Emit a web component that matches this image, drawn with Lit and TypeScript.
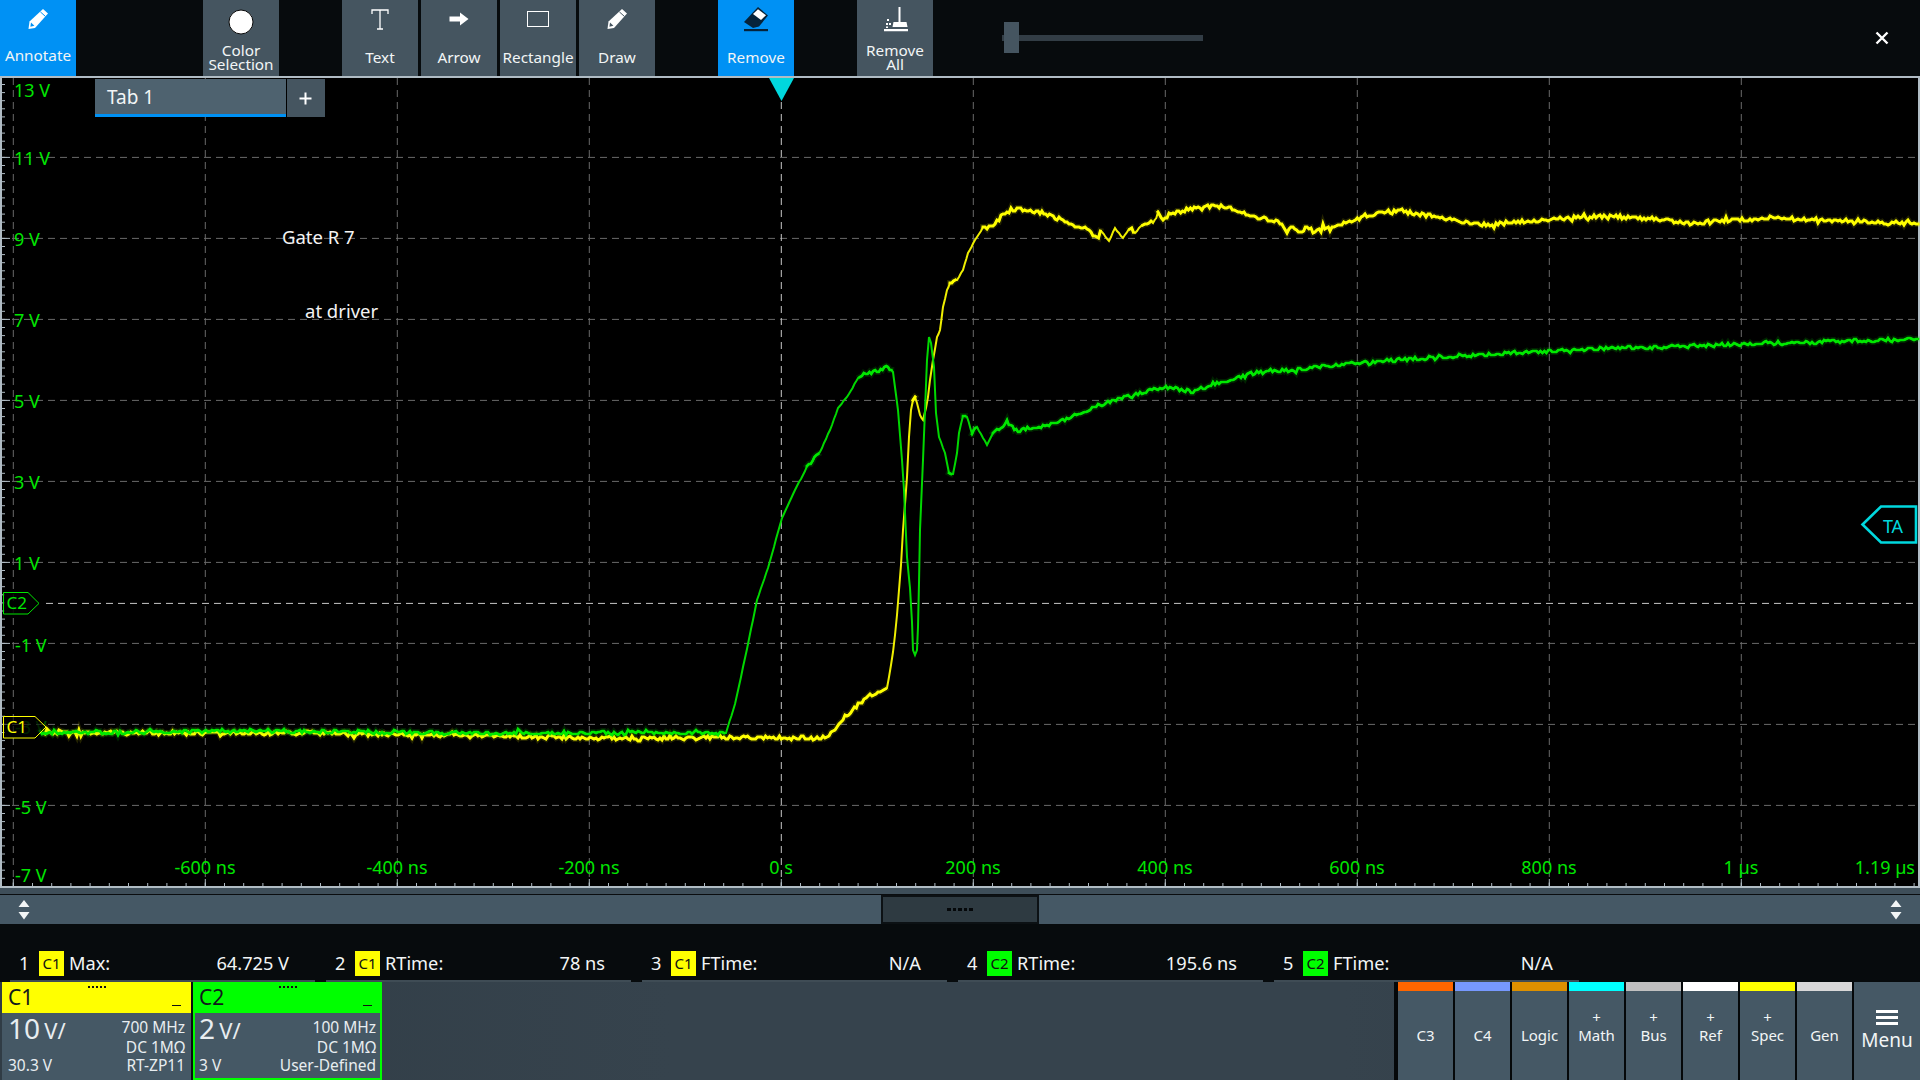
import { LitElement, html, css, svg } from "lit";
import { customElement } from "lit/decorators.js";

type P = [number, number];
const YEL: P[] = [[45,733],[300,733],[500,736],[600,738],[700,738],[825,738],[835,729],[845,717],[860,703],[870,696],[880,693],[887,688],[889,677],[891,665],[893,652],[895,635],[897,615],[899,590],[901,565],[903,530],[907,477],[909,437],[911,410],[913,399],[917,403],[920,415],[923,420],[926,408],[928,397],[930,380],[933,360],[937,337],[940,330],[943,307],[947,290],[950,283],[957,280],[963,270],[968,253],[975,240],[983,228],[993,226],[1003,215],[1017,209],[1040,212],[1057,218],[1073,225],[1087,228],[1095,237],[1102,232],[1109,241],[1115,228],[1123,238],[1130,227],[1135,233],[1143,223],[1153,223],[1158,215],[1163,218],[1173,213],[1200,207],[1223,206],[1240,212],[1260,218],[1280,222],[1287,230],[1293,227],[1302,233],[1307,227],[1315,233],[1323,228],[1330,230],[1340,224],[1365,216],[1396,211],[1430,216],[1482,225],[1540,220],[1604,216],[1650,219],[1690,223],[1776,218],[1850,221],[1920,224]];
const GRN: P[] = [[40,733],[250,731],[500,733],[600,733],[726,733],[735,704],[747,649],[757,600],[768,568],[782,518],[795,490],[807,467],[820,452],[830,430],[838,408],[847,397],[860,375],[877,371],[888,367],[893,372],[898,410],[902,460],[904,490],[907,557],[910,588],[912,622],[913,650],[915,655],[917,650],[918,627],[919,583],[920,530],[923,460],[925,410],[927,360],[929,337],[931,343],[934,367],[936,413],[939,437],[945,453],[949,473],[953,474],[957,453],[959,433],[963,415],[967,417],[972,433],[977,427],[987,445],[993,433],[1007,423],[1018,431],[1035,428],[1053,424],[1102,404],[1140,393],[1166,387],[1193,392],[1217,383],[1253,373],[1290,370],[1338,365],[1371,362],[1469,355],[1592,349],[1714,345],[1920,339]];

interface Trace { all: string; flat: string; }

function trace(pts: P[], amp: number, seed: number): Trace {
  let s = seed;
  const rnd = () => { s = (s * 16807) % 2147483647; return s / 2147483647 - 0.5; };
  let all = "";
  let flat = "";
  let inFlat = false;
  let first = true;
  for (let i = 0; i < pts.length - 1; i++) {
    const [x0, y0] = pts[i], [x1, y1] = pts[i + 1];
    const n = Math.max(1, Math.round((x1 - x0) / 2));
    const steep = Math.abs(y1 - y0) / Math.max(1, x1 - x0) > 1.2;
    for (let k = 0; k < n; k++) {
      const t = k / n;
      const x = x0 + (x1 - x0) * t;
      const spike = rnd() > 0.42 ? 2 : 1;
      const y = Math.round(y0 + (y1 - y0) * t + (steep ? 0 : rnd() * amp * spike));
      all += `${first ? "M" : "L"}${x.toFixed(1)} ${y}`;
      first = false;
      if (!steep) {
        flat += `${inFlat ? "L" : "M"}${x.toFixed(1)} ${y}`;
        inFlat = true;
      } else {
        inFlat = false;
      }
    }
  }
  return { all, flat };
}
const yel = trace(YEL, 3.8, 12345);
const grn = trace(GRN, 3.6, 6789);

const H_LINES = Array.from({ length: 10 }, (_, i) => 76.4 + i * 81);
const V_LINES = Array.from({ length: 10 }, (_, i) => 13.3 + i * 192);
const Y_LABELS: [string, number, number][] = [["13 V",14,90],["11 V",14,158],["9 V",14,239],["7 V",14,320],["5 V",14,401],["3 V",14,482],["1 V",14,563],["-1 V",15,645],["-5 V",15,807],["-7 V",15,875]];
const T_LABELS: [string, number][] = [["-600 ns",205],["-400 ns",397],["-200 ns",589],["0 s",781],["200 ns",973],["400 ns",1165],["600 ns",1357],["800 ns",1549],["1 µs",1741]];

const pencil = html`<svg class="ico" width="20" height="20" viewBox="0 0 20 20"><path fill="#fff" d="M15 0 L20 4.5 L7 19 L0.5 20 L1.5 12.5 Z"/><path fill="none" stroke="#0091f4" stroke-width="1" d="M12.4 2.9 L17.4 7.4"/><path fill="#0091f4" d="M3 13.5 L6.4 16.8 L2.4 17.8 Z"/></svg>`;
const pencilGrey = html`<svg class="ico" width="20" height="20" viewBox="0 0 20 20"><path fill="#fff" d="M15 0 L20 4.5 L7 19 L0.5 20 L1.5 12.5 Z"/><path fill="none" stroke="#455560" stroke-width="1" d="M12.4 2.9 L17.4 7.4"/><path fill="#455560" d="M3 13.5 L6.4 16.8 L2.4 17.8 Z"/></svg>`;

interface Meas { n: string; ch: string; label: string; val: string; }
const MEAS: Meas[] = [
  { n: "1", ch: "C1", label: "Max:", val: "64.725 V" },
  { n: "2", ch: "C1", label: "RTime:", val: "78 ns" },
  { n: "3", ch: "C1", label: "FTime:", val: "N/A" },
  { n: "4", ch: "C2", label: "RTime:", val: "195.6 ns" },
  { n: "5", ch: "C2", label: "FTime:", val: "N/A" },
];
const SIDE: { t: string; c: string; plus?: boolean }[] = [
  { t: "C3", c: "#ff6600" }, { t: "C4", c: "#7799ff" }, { t: "Logic", c: "#dd9000" },
  { t: "Math", c: "#00ffff", plus: true }, { t: "Bus", c: "#c0c0c0", plus: true },
  { t: "Ref", c: "#ffffff", plus: true }, { t: "Spec", c: "#ffff00", plus: true }, { t: "Gen", c: "#d8d8d8" },
];

@customElement("app-root")
export class AppRoot extends LitElement {
  static styles = css`
    :host { display: block; width: 1920px; height: 1080px; overflow: hidden; background: #000; color: #f2f5f6; font-family: "Noto Sans", "Open Sans", sans-serif; }
    * { box-sizing: border-box; }
    .top { display: flex; height: 76px; background: #070b0d; }
    .btn { width: 76px; height: 76px; background: #455560; position: relative; display: flex; flex-direction: column; align-items: center; font-size: 15.3px; line-height: 14px; text-align: center; color: #f2f5f6; }
    .btn .lab { position: absolute; left: 0; right: 0; bottom: 12px; white-space: nowrap; }
    .btn .lab.up { bottom: 14px; }
    .btn .lab.two { bottom: 5px; }
    .btn .ico { margin-top: 9px; display: block; }
    .btn .ico.hi { margin-top: 7px; }
    .on { background: #0091f4; }
    .ml127 { margin-left: 127px; }
    .ml63 { margin-left: 63px; }
    .ml3 { margin-left: 3px; }
    .slider { margin-left: 69px; width: 201px; position: relative; height: 76px; }
    .track { position: absolute; left: 0; right: 0; top: 35px; height: 6px; background: #323d45; }
    .thumb { position: absolute; left: 2px; top: 22px; width: 15px; height: 31px; background: #455560; }
    .close { margin-left: auto; margin-right: 31px; align-self: center; display: block; }
    .rule { height: 2px; background: #b0bcc4; }
    .plot { position: relative; height: 810px; background: #000; }
    .plot svg.scope { display: block; width: 1920px; height: 810px; font-family: "Noto Sans", "Open Sans", sans-serif; }
    .tabs { position: absolute; left: 95px; top: 1px; display: flex; height: 38px; }
    .tab { width: 191px; height: 38px; background: #4e626f; border-bottom: 3px solid #0091f4; font-size: 19px; line-height: 36px; padding-left: 12px; color: #f2f5f6; }
    .add { margin-left: 1px; width: 38px; height: 38px; background: #455560; display: flex; align-items: center; justify-content: center; padding-right: 2px; }
    .band { height: 6px; background: #3e4e59; }
    .scroll { height: 30px; background: #455865; border-top: 1px solid #0a0d0f; display: flex; align-items: center; }
    .arrows { width: 48px; display: flex; align-items: center; justify-content: center; }
    .handle { margin-left: 833px; width: 158px; height: 29px; background: #2e3a41; border: 2px solid #0c1114; display: flex; align-items: center; justify-content: center; gap: 2px; }
    .handle i { width: 3.5px; height: 3px; background: #05080a; display: block; }
    .right { margin-left: auto; }
    .meas { height: 58px; background: #070b0d; display: flex; padding-left: 10px; gap: 11px; }
    .m { width: 305px; height: 58px; border-bottom: 2px solid #3f4c55; padding: 27px 26px 0 9px; display: flex; align-items: flex-start; font-size: 18.2px; line-height: 25px; color: #f2f5f6; }
    .m .n { width: 20px; }
    .m .b { width: 25px; height: 25px; text-align: center; color: #111; font-size: 15px; margin-right: 5px; }
    .b.C1 { background: #ffff00; }
    .b.C2 { background: #00ff00; }
    .m .v { margin-left: auto; }
    .bottom { height: 98px; display: flex; background: linear-gradient(90deg, #303c45, #36434d 35%, #36434d 70%, #2f3b44); }
    .cards { display: flex; gap: 2px; margin-left: 2px; background: #0a0d0f; }
    .card { width: 189px; height: 98px; background: #455865; color: #e8edf0; display: flex; flex-direction: column; }
    .head { height: 31px; position: relative; padding-left: 6px; font-size: 21px; line-height: 31px; color: #10181c; }
    .head.C1 { background: #ffff00; }
    .head.C2 { background: #00ff00; }
    .head .dots { position: absolute; left: 86px; top: 4px; width: 18px; height: 2px; background: repeating-linear-gradient(90deg, #111 0 2px, transparent 2px 4px); }
    .head .dash { position: absolute; right: 10px; bottom: 7px; width: 9px; height: 1.5px; background: #111; }
    .body { flex: 1; display: grid; grid-template-columns: auto 1fr; grid-template-rows: 42px 20px; padding: 0 6px; font-size: 15.5px; }
    .card.boxed .body { border: 2px solid #00ff00; border-top: 0; padding: 0 4px; }
    .scale { font-size: 28px; line-height: 30px; white-space: nowrap; }
    .scale small { font-size: 22px; margin-left: -3px; }
    .spec { text-align: right; line-height: 20px; padding-top: 4px; }
    .off { line-height: 20px; padding-top: 0; }
    .spacer { flex: 1; }
    .side { display: flex; gap: 2px; padding-left: 4px; background: #05080a; }
    .sb { width: 55px; height: 98px; background: #455865; position: relative; font-size: 15px; text-align: center; }
    .sb .bar { height: 9px; }
    .sb .plus { position: absolute; left: 0; right: 0; top: 26px; line-height: 18px; font-size: 15px; }
    .sb .t { position: absolute; left: 0; right: 0; top: 42px; line-height: 22px; }
    .menu { width: 66px; height: 98px; background: #455865; position: relative; text-align: center; font-size: 19px; }
    .menu .burger { position: absolute; left: 22px; top: 28px; width: 22px; height: 15px; background: repeating-linear-gradient(180deg, #fff 0 3px, transparent 3px 6px); }
    .menu .t { position: absolute; left: 0; right: 0; top: 44px; line-height: 28px; }
  `;

  private scope() {
    const minor: unknown[] = [];
    for (let y = 76.4; y < 886; y += 8.1) minor.push(svg`<line x1="0" x2="5" y1=${y} y2=${y}/>`);
    for (let x = 13.3; x < 1920; x += 19.2) minor.push(svg`<line x1=${x} x2=${x} y1="883" y2="886"/>`);
    return svg`
      <svg class="scope" viewBox="0 78 1920 810" xmlns="http://www.w3.org/2000/svg">
        <g fill="none" stroke="#6a6a6a" stroke-width="1" stroke-dasharray="7 5">
          ${H_LINES.map((y) => svg`<line x1="0" x2="1920" y1=${y} y2=${y}/>`)}
          ${V_LINES.map((x) => svg`<line x1=${x} x2=${x} y1="78" y2="886" stroke=${x === 781.3 ? "#c8c8c8" : "#6a6a6a"}/>`)}
          <line x1="46" x2="1920" y1="603.4" y2="603.4" stroke="#c8c8c8"/>
        </g>
        <g stroke="#b0bcc4" stroke-width="1" fill="none">
          ${minor}
          ${H_LINES.map((y) => svg`<line x1="0" x2="10" y1=${y} y2=${y}/>`)}
          ${V_LINES.map((x) => svg`<line x1=${x} x2=${x} y1="879" y2="886"/>`)}
        </g>
        <rect x="0" y="78" width="2" height="810" fill="#b0bcc4"/>
        <rect x="1918" y="78" width="2" height="810" fill="#b0bcc4"/>
        <rect x="0" y="886" width="1920" height="2" fill="#b0bcc4"/>
        <g font-size="18" fill="#00e600">
          ${Y_LABELS.map(([t, x, y]) => svg`<text x=${x} y=${y + 7}>${t}</text>`)}
          <text x="15" y="734" opacity="0.35">-3 V</text>
          ${T_LABELS.map(([t, x]) => svg`<text x=${x} y="874" text-anchor="middle">${t}</text>`)}
          <text x="1915" y="874" text-anchor="end">1.19 µs</text>
        </g>
        <g font-size="18.5" fill="#f4f4f4">
          <text x="282" y="244">Gate R 7</text>
          <text x="305" y="318">at driver</text>
        </g>
        <g fill="none" stroke-linejoin="miter" stroke-linecap="square">
          <path d=${yel.flat} stroke="#ffff00" stroke-width="6" opacity="0.13"/>
          <path d=${yel.all} stroke="#eeee00" stroke-width="2"/>
          <path d=${yel.flat} stroke="#ffff00" stroke-width="3"/>
          <path d=${grn.flat} stroke="#00ff00" stroke-width="6" opacity="0.13"/>
          <path d=${grn.all} stroke="#00d800" stroke-width="2"/>
          <path d=${grn.flat} stroke="#00e800" stroke-width="2.6"/>
        </g>
        <polygon points="769,78 794,78 781.5,101" fill="#00d8de"/>
        <polygon points="3.5,592.5 28,592.5 39,603.4 28,614 3.5,614" fill="#000" fill-opacity="0.85" stroke="#00e600" stroke-width="1"/>
        <text x="6.5" y="609" font-size="17" fill="#00e600">C2</text>
        <polygon points="3.5,716.5 35,716.5 46,727 35,738 3.5,738" fill="#000" fill-opacity="0.6" stroke="#ffff00" stroke-width="1"/>
        <text x="6.5" y="733" font-size="17" fill="#ffff00">C1</text>
        <polygon points="1862.5,524.5 1881,506.5 1916,506.5 1916,542.5 1881,542.5" fill="#000" stroke="#00d8de" stroke-width="2.6"/>
        <text x="1893" y="533" text-anchor="middle" font-size="18" fill="#00d8de">TA</text>
      </svg>`;
  }

  private updown() {
    return html`<svg width="12" height="20" viewBox="0 0 12 20"><path fill="#f2f5f6" d="M6 0 L11.5 7 H0.5 Z M0.5 12 H11.5 L6 19.5 Z"/></svg>`;
  }

  render() {
    return html`
      <div class="top">
        <div class="btn on">${pencil}<span class="lab up">Annotate</span></div>
        <div class="btn ml127">
          <svg class="ico" width="26" height="26" viewBox="0 0 26 26"><circle cx="13" cy="13" r="12" fill="#fff" stroke="#0a0a0a" stroke-width="1"/></svg>
          <span class="lab two">Color<br />Selection</span>
        </div>
        <div class="btn ml63">
          <svg class="ico" width="18" height="21" viewBox="0 0 18 21"><path fill="none" stroke="#fff" stroke-width="1.3" d="M1 5 V1 H17 V5 M9 1 V20 M6 20 H12"/></svg>
          <span class="lab">Text</span>
        </div>
        <div class="btn ml3">
          <svg class="ico" width="20" height="20" viewBox="0 0 20 20"><path fill="#fff" d="M0.5 7.5 H11 V3.5 L19.5 10 L11 16.5 V12.5 H0.5 Z"/></svg>
          <span class="lab">Arrow</span>
        </div>
        <div class="btn ml3">
          <svg class="ico" width="22" height="18" viewBox="0 0 22 18"><rect x="0.5" y="2.5" width="21" height="15" fill="none" stroke="#fff" stroke-width="1"/></svg>
          <span class="lab">Rectangle</span>
        </div>
        <div class="btn ml3">${pencilGrey}<span class="lab">Draw</span></div>
        <div class="btn on ml63">
          <svg class="ico hi" width="26" height="25" viewBox="0 0 26 25"><path fill="#06233a" d="M15 0 L25 8.5 L16 19.5 L10 21 L1 15 Z"/><path fill="#fff" d="M15 2.3 L23 8.3 L18 13 L10 7 Z"/><rect x="1" y="22" width="24" height="2.2" fill="#06233a"/></svg>
          <span class="lab">Remove</span>
        </div>
        <div class="btn ml63">
          <svg class="ico hi" width="25" height="25" viewBox="0 0 25 25"><path fill="#fff" d="M15.5 0 H17.5 V15 H15.5 Z M10.5 15 H23.5 L24.5 20 H9.5 Z M1 22 H25 V24.2 H1 Z M4 12 H6 V14 H4 Z M3 16 H5 V18 H3 Z M6 16 H8 V18 H6 Z M3 19.5 H5 V21 H3 Z"/></svg>
          <span class="lab two">Remove<br />All</span>
        </div>
        <div class="slider"><div class="track"></div><div class="thumb"></div></div>
        <svg class="close" width="14" height="14" viewBox="0 0 14 14"><path stroke="#fff" stroke-width="2.4" d="M1.5 1.5 L12.5 12.5 M12.5 1.5 L1.5 12.5"/></svg>
      </div>
      <div class="rule"></div>
      <div class="plot">
        ${this.scope()}
        <div class="tabs">
          <div class="tab">Tab 1</div>
          <div class="add"><svg width="13" height="13" viewBox="0 0 13 13"><path stroke="#fff" stroke-width="2" d="M6.5 0.5 V12.5 M0.5 6.5 H12.5"/></svg></div>
        </div>
      </div>
      <div class="band"></div>
      <div class="scroll">
        <div class="arrows">${this.updown()}</div>
        <div class="handle"><i></i><i></i><i></i><i></i><i></i></div>
        <div class="arrows right">${this.updown()}</div>
      </div>
      <div class="meas">
        ${MEAS.map((m) => html`<div class="m"><span class="n">${m.n}</span><span class="b ${m.ch}">${m.ch}</span><span>${m.label}</span><span class="v">${m.val}</span></div>`)}
      </div>
      <div class="bottom">
        <div class="cards">
          <div class="card">
            <div class="head C1">C1<span class="dots"></span><span class="dash"></span></div>
            <div class="body">
              <div class="scale">10 <small>V/</small></div><div class="spec">700 MHz<br />DC 1MΩ</div>
              <div class="off">30.3 V</div><div class="spec off">RT-ZP11</div>
            </div>
          </div>
          <div class="card boxed">
            <div class="head C2">C2<span class="dots"></span><span class="dash"></span></div>
            <div class="body">
              <div class="scale">2 <small>V/</small></div><div class="spec">100 MHz<br />DC 1MΩ</div>
              <div class="off">3 V</div><div class="spec off">User-Defined</div>
            </div>
          </div>
        </div>
        <div class="spacer"></div>
        <div class="side">
          ${SIDE.map((s) => html`<div class="sb"><div class="bar" style="background:${s.c}"></div>${s.plus ? html`<span class="plus">+</span>` : ""}<span class="t">${s.t}</span></div>`)}
          <div class="menu"><div class="burger"></div><span class="t">Menu</span></div>
        </div>
      </div>
    `;
  }
}
